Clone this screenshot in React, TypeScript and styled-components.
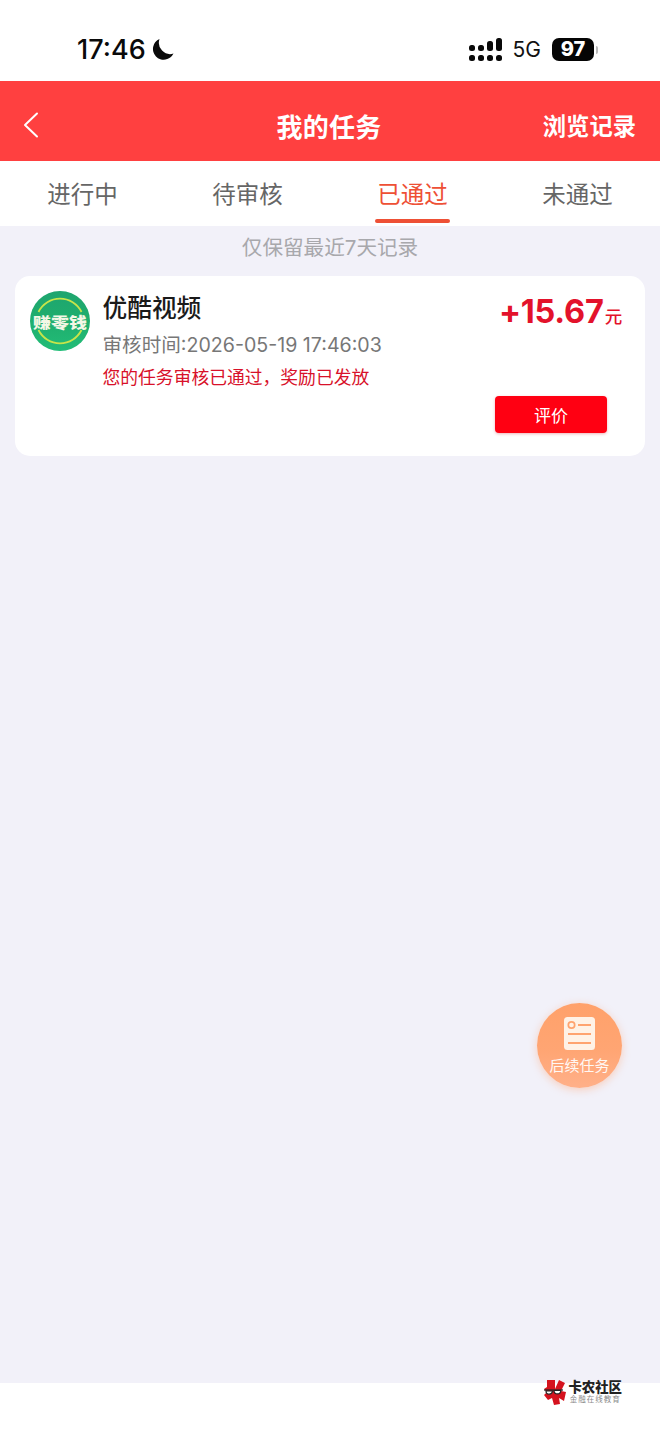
import React from "react";
import styled, { createGlobalStyle } from "styled-components";

const CJK = `"Inter", "Noto Sans CJK SC", sans-serif`;

const Global = createGlobalStyle`
  html, body { margin: 0; padding: 0; background: #fff; }
  * { box-sizing: border-box; }
  body { font-family: ${CJK}; }
`;

const Page = styled.div`
  width: 660px;
  height: 1434px;
  display: flex;
  flex-direction: column;
  overflow: hidden;
  background: #f2f1f9;
`;

const StatusBar = styled.div`
  height: 81px;
  flex: none;
  background: #fff;
  display: flex;
  align-items: flex-start;
  justify-content: space-between;
  padding: 33px 66px 0 77px;
`;

const Clock = styled.div`
  display: flex;
  align-items: center;
  gap: 5px;
  height: 32px;
  font-size: 27px;
  font-weight: 500;
  color: #0a0a0a;
`;

const StatusRight = styled.div`
  display: flex;
  align-items: center;
  height: 32px;
`;

const NetLabel = styled.span`
  font-family: "Inter", sans-serif;
  font-size: 21px;
  font-weight: 400;
  color: #111;
  margin: 0 11px 0 11px;
`;

const Battery = styled.div`
  width: 42px;
  height: 23px;
  border-radius: 7px;
  background: #050505;
  color: #fff;
  font-size: 20px;
  font-weight: 800;
  display: flex;
  align-items: center;
  justify-content: center;
  position: relative;
  &::after {
    content: "";
    position: absolute;
    right: -4px;
    top: 8px;
    width: 2px;
    height: 8px;
    border-radius: 0 2px 2px 0;
    background: #b9b9b9;
  }
`;

const Header = styled.header`
  height: 80px;
  flex: none;
  background: #ff4040;
  display: grid;
  grid-template-columns: 1fr auto 1fr;
  align-items: center;
  padding: 8px 24px 0 22px;
  color: #fff;
`;

const BackButton = styled.div`
  display: flex;
  align-items: center;
`;

const HeaderTitle = styled.h1`
  margin: 0;
  font-size: 26px;
  font-weight: 700;
  letter-spacing: 0.2px;
`;

const HeaderLink = styled.div`
  justify-self: end;
  font-size: 23.3px;
  font-weight: 700;
`;

const Tabs = styled.nav`
  height: 65px;
  flex: none;
  background: #fff;
  display: grid;
  grid-template-columns: repeat(4, 1fr);
`;

const Tab = styled.div<{ $active?: boolean }>`
  position: relative;
  display: flex;
  justify-content: center;
  padding-top: 18px;
  font-size: 23.5px;
  line-height: 32px;
  color: ${(p) => (p.$active ? "#ee5035" : "#666")};
  ${(p) =>
    p.$active &&
    `&::after {
      content: "";
      position: absolute;
      left: 45px;
      bottom: 3px;
      width: 75px;
      height: 4px;
      border-radius: 2px;
      background: #ee5035;
    }`}
`;

const Content = styled.main`
  flex: 1;
  position: relative;
  padding: 8px 15px 0;
`;

const Notice = styled.div`
  text-align: center;
  font-size: 20.6px;
  line-height: 28px;
  color: #a8a8ac;
  margin-bottom: 14px;
`;

const Card = styled.section`
  height: 180px;
  background: #fff;
  border-radius: 15px;
  padding: 15px 23px 23px 15px;
  display: flex;
  gap: 12.5px;
`;

const Logo = styled.div`
  flex: none;
  width: 60px;
  height: 60px;
  border-radius: 50%;
  background: linear-gradient(180deg, #1ea56f 0%, #1fae6d 50%, #22bd78 100%);
  position: relative;
  display: flex;
  align-items: center;
  justify-content: center;
`;

const LogoRing = styled.svg`
  position: absolute;
  inset: 0;
`;

const LogoText = styled.span`
  position: relative;
  font-size: 18px;
  font-weight: 900;
  color: #f4f7e6;
  white-space: nowrap;
  letter-spacing: 0;
  transform: scale(1, 0.82);
`;

const CardBody = styled.div`
  flex: 1;
  display: flex;
  flex-direction: column;
`;

const TaskName = styled.div`
  font-size: 24.7px;
  line-height: 34px;
  font-weight: 500;
  color: #1a1a1a;
`;

const TaskTime = styled.div`
  margin-top: 5px;
  font-size: 19.6px;
  line-height: 30px;
  color: #777;
`;

const TaskNote = styled.div`
  margin-top: 5px;
  font-size: 17.8px;
  line-height: 26px;
  color: #d8112a;
`;

const CardSide = styled.div`
  flex: none;
  display: flex;
  flex-direction: column;
  justify-content: space-between;
  align-items: flex-end;
`;

const Amount = styled.div`
  display: flex;
  align-items: baseline;
  margin-top: 1px;
  color: #e3122b;
  font-size: 32.5px;
  line-height: 40px;
  font-weight: 700;
  letter-spacing: -0.2px;
`;

const Unit = styled.span`
  font-size: 17.5px;
  font-weight: 500;
  margin-left: 1px;
`;

const RateButton = styled.div`
  width: 112px;
  height: 37px;
  margin-right: 15px;
  border-radius: 4px;
  background: #ff0012;
  box-shadow: 0 1px 3px rgba(200, 0, 20, 0.3);
  color: #fff;
  font-size: 17px;
  display: flex;
  align-items: center;
  justify-content: center;
`;

const Fab = styled.div`
  position: absolute;
  left: 537px;
  top: 777px;
  width: 85px;
  height: 85px;
  border-radius: 50%;
  background: linear-gradient(180deg, #ffa16a 0%, #ffa573 55%, #ffb089 100%);
  box-shadow: 0 2px 8px rgba(255, 165, 115, 0.45);
  display: flex;
  flex-direction: column;
  align-items: center;
  padding-top: 14px;
  gap: 6px;
  color: #fff;
`;

const FabLabel = styled.span`
  font-size: 15px;
  line-height: 20px;
  white-space: nowrap;
  opacity: 0.92;
`;

const Footer = styled.footer`
  height: 51px;
  flex: none;
  background: #fff;
  display: flex;
  align-items: flex-start;
  justify-content: flex-end;
  padding: 0 38px 0 0;
  gap: 1px;
`;

const WatermarkText = styled.div`
  display: flex;
  flex-direction: column;
  align-items: center;
  margin-top: -4px;
`;

const WatermarkName = styled.span`
  font-size: 13.4px;
  line-height: 16px;
  font-weight: 900;
  color: #222;
`;

const WatermarkSub = styled.span`
  font-size: 7.5px;
  line-height: 9px;
  letter-spacing: 1px;
  color: #8a8a8a;
`;

const WatermarkMark = styled.svg`
  margin-top: -4px;
`;

const Signal = () => (
  <svg width="33" height="23" viewBox="0 0 33 23" fill="#0a0a0a">
    <rect x="0" y="7" width="6" height="6" rx="2.5" />
    <rect x="0" y="17" width="6" height="6" rx="2.5" />
    <rect x="9" y="7" width="6" height="6" rx="2.5" />
    <rect x="9" y="17" width="6" height="6" rx="2.5" />
    <rect x="18" y="3" width="6" height="10" rx="2.5" />
    <rect x="18" y="17" width="6" height="6" rx="2.5" />
    <rect x="27" y="0" width="6" height="13" rx="2.5" />
    <rect x="27" y="17" width="6" height="6" rx="2.5" />
  </svg>
);

const Moon = () => (
  <svg width="23" height="23" viewBox="0 0 23 23">
    <path d="M8.5 1A10.8 10.8 0 1 0 22.5 15.6 11.4 11.4 0 0 1 8.5 1Z" fill="#0a0a0a" />
  </svg>
);

const tabs = ["进行中", "待审核", "已通过", "未通过"];

export default function App() {
  return (
    <Page>
      <Global />
      <StatusBar>
        <Clock>
          17:46
          <Moon />
        </Clock>
        <StatusRight>
          <Signal />
          <NetLabel>5G</NetLabel>
          <Battery>97</Battery>
        </StatusRight>
      </StatusBar>
      <Header>
        <BackButton>
          <svg width="18" height="28" viewBox="0 0 18 28" fill="none">
            <path d="M15 2.5 3 14l12 11.5" stroke="#fff" strokeWidth="2" strokeLinecap="round" strokeLinejoin="round" />
          </svg>
        </BackButton>
        <HeaderTitle>我的任务</HeaderTitle>
        <HeaderLink>浏览记录</HeaderLink>
      </Header>
      <Tabs>
        {tabs.map((t) => (
          <Tab key={t} $active={t === "已通过"}>
            {t}
          </Tab>
        ))}
      </Tabs>
      <Content>
        <Notice>仅保留最近7天记录</Notice>
        <Card>
          <Logo>
            <LogoRing width="60" height="60" viewBox="0 0 60 60" fill="none">
              <path d="M8.5 21A24 24 0 0 1 51.5 21M51.5 39A24 24 0 0 1 8.5 39" stroke="#c6e44a" strokeWidth="1.8" />
            </LogoRing>
            <LogoText>赚零钱</LogoText>
          </Logo>
          <CardBody>
            <TaskName>优酷视频</TaskName>
            <TaskTime>审核时间:2026-05-19 17:46:03</TaskTime>
            <TaskNote>您的任务审核已通过，奖励已发放</TaskNote>
          </CardBody>
          <CardSide>
            <Amount>
              +15.67<Unit>元</Unit>
            </Amount>
            <RateButton>评价</RateButton>
          </CardSide>
        </Card>
        <Fab>
          <svg width="31" height="33" viewBox="0 0 31 33" fill="none">
            <rect width="31" height="33" rx="3.5" fill="#fff2e6" />
            <circle cx="7.5" cy="8" r="3.2" stroke="#ffa36e" strokeWidth="1.7" />
            <path d="M14 8h13M4 17h23M4 26h23" stroke="#ffa36e" strokeWidth="2.2" />
          </svg>
          <FabLabel>后续任务</FabLabel>
        </Fab>
      </Content>
      <Footer>
        <WatermarkMark width="24" height="26" viewBox="0 0 24 26">
          <path d="M4 1h8v9L16 1l6 3-4 8 5 1-2 9-5-3 1 6-6 1-2-7-4 2-4-5 3-3-3-3 3-2z" fill="#d5121e" />
          <path d="M3 12a3.2 3.2 0 0 0 6.4 0zM11 11.5a3.4 3.4 0 0 0 6.8 0z" fill="#fff" stroke="#222" strokeWidth="1.2" />
          <path d="M1 11h19" stroke="#222" strokeWidth="1.2" />
        </WatermarkMark>
        <WatermarkText>
          <WatermarkName>卡农社区</WatermarkName>
          <WatermarkSub>金融在线教育</WatermarkSub>
        </WatermarkText>
      </Footer>
    </Page>
  );
}
